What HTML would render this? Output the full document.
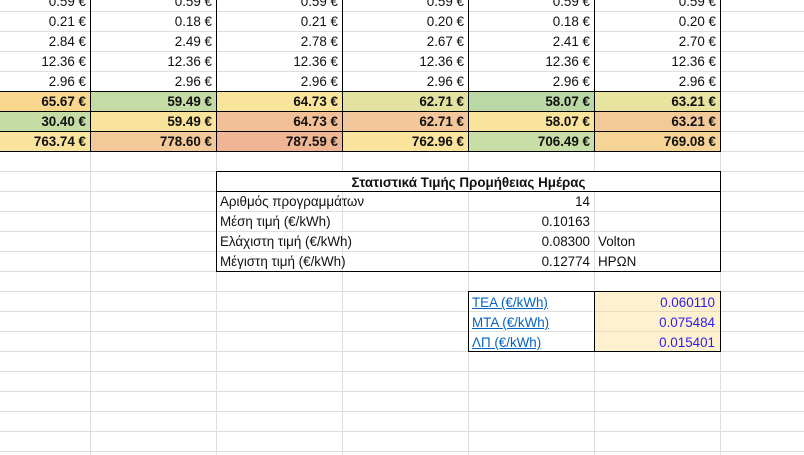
<!DOCTYPE html>
<html><head><meta charset="utf-8"><style>
body{margin:0;width:804px;height:455px;overflow:hidden;background:#fff;font-family:"Liberation Sans",sans-serif;font-size:13.4px;color:#111;position:relative}
.h{position:absolute;left:0;width:804px;height:1px;background:#dedede}
.v{position:absolute;top:0;width:1px;height:455px;background:#dedede}
.c{position:absolute;height:20px;line-height:21px;box-sizing:border-box;text-align:right;padding-right:5px;white-space:nowrap}
.b{font-weight:bold}
.bk{position:absolute;background:#000}
</style></head><body>
<div class="h" style="top:11px"></div><div class="h" style="top:31px"></div><div class="h" style="top:51px"></div><div class="h" style="top:71px"></div><div class="h" style="top:91px"></div><div class="h" style="top:111px"></div><div class="h" style="top:131px"></div><div class="h" style="top:151px"></div><div class="h" style="top:171px"></div><div class="h" style="top:191px"></div><div class="h" style="top:211px"></div><div class="h" style="top:231px"></div><div class="h" style="top:251px"></div><div class="h" style="top:271px"></div><div class="h" style="top:291px"></div><div class="h" style="top:311px"></div><div class="h" style="top:331px"></div><div class="h" style="top:351px"></div><div class="h" style="top:371px"></div><div class="h" style="top:391px"></div><div class="h" style="top:411px"></div><div class="h" style="top:431px"></div><div class="h" style="top:451px"></div>
<div class="v" style="left:90px"></div><div class="v" style="left:216px"></div><div class="v" style="left:342px"></div><div class="v" style="left:468px"></div><div class="v" style="left:594px"></div><div class="v" style="left:720px"></div>

<div class="c b" style="left:0;top:91px;width:91px;background:#f9d78f">65.67 €</div>
<div class="c b" style="left:90px;top:91px;width:127px;background:#c4dba6">59.49 €</div>
<div class="c b" style="left:216px;top:91px;width:127px;background:#f8e59b">64.73 €</div>
<div class="c b" style="left:342px;top:91px;width:127px;background:#e3e1a0">62.71 €</div>
<div class="c b" style="left:468px;top:91px;width:127px;background:#b9d8a6">58.07 €</div>
<div class="c b" style="left:594px;top:91px;width:127px;background:#e8e39f">63.21 €</div>
<div class="c b" style="left:0;top:111px;width:91px;background:#c5dca5">30.40 €</div>
<div class="c b" style="left:90px;top:111px;width:127px;background:#f9e39b">59.49 €</div>
<div class="c b" style="left:216px;top:111px;width:127px;background:#f2bf96">64.73 €</div>
<div class="c b" style="left:342px;top:111px;width:127px;background:#f3c799">62.71 €</div>
<div class="c b" style="left:468px;top:111px;width:127px;background:#fae39c">58.07 €</div>
<div class="c b" style="left:594px;top:111px;width:127px;background:#f4c999">63.21 €</div>
<div class="c b" style="left:0;top:131px;width:91px;background:#fae39c">763.74 €</div>
<div class="c b" style="left:90px;top:131px;width:127px;background:#f4c99a">778.60 €</div>
<div class="c b" style="left:216px;top:131px;width:127px;background:#efb594">787.59 €</div>
<div class="c b" style="left:342px;top:131px;width:127px;background:#fae39c">762.96 €</div>
<div class="c b" style="left:468px;top:131px;width:127px;background:#c9dea6">706.49 €</div>
<div class="c b" style="left:594px;top:131px;width:127px;background:#f6d496">769.08 €</div>

<div class="c" style="left:0;top:-9px;width:91px">0.59 €</div><div class="c" style="left:90px;top:-9px;width:127px">0.59 €</div><div class="c" style="left:216px;top:-9px;width:127px">0.59 €</div><div class="c" style="left:342px;top:-9px;width:127px">0.59 €</div><div class="c" style="left:468px;top:-9px;width:127px">0.59 €</div><div class="c" style="left:594px;top:-9px;width:127px">0.59 €</div>
<div class="c" style="left:0;top:11px;width:91px">0.21 €</div><div class="c" style="left:90px;top:11px;width:127px">0.18 €</div><div class="c" style="left:216px;top:11px;width:127px">0.21 €</div><div class="c" style="left:342px;top:11px;width:127px">0.20 €</div><div class="c" style="left:468px;top:11px;width:127px">0.18 €</div><div class="c" style="left:594px;top:11px;width:127px">0.20 €</div>
<div class="c" style="left:0;top:31px;width:91px">2.84 €</div><div class="c" style="left:90px;top:31px;width:127px">2.49 €</div><div class="c" style="left:216px;top:31px;width:127px">2.78 €</div><div class="c" style="left:342px;top:31px;width:127px">2.67 €</div><div class="c" style="left:468px;top:31px;width:127px">2.41 €</div><div class="c" style="left:594px;top:31px;width:127px">2.70 €</div>
<div class="c" style="left:0;top:51px;width:91px">12.36 €</div><div class="c" style="left:90px;top:51px;width:127px">12.36 €</div><div class="c" style="left:216px;top:51px;width:127px">12.36 €</div><div class="c" style="left:342px;top:51px;width:127px">12.36 €</div><div class="c" style="left:468px;top:51px;width:127px">12.36 €</div><div class="c" style="left:594px;top:51px;width:127px">12.36 €</div>
<div class="c" style="left:0;top:71px;width:91px">2.96 €</div><div class="c" style="left:90px;top:71px;width:127px">2.96 €</div><div class="c" style="left:216px;top:71px;width:127px">2.96 €</div><div class="c" style="left:342px;top:71px;width:127px">2.96 €</div><div class="c" style="left:468px;top:71px;width:127px">2.96 €</div><div class="c" style="left:594px;top:71px;width:127px">2.96 €</div>

<div class="bk" style="left:90px;top:0;width:1px;height:152px"></div>
<div class="bk" style="left:216px;top:0;width:1px;height:152px"></div>
<div class="bk" style="left:342px;top:0;width:1px;height:152px"></div>
<div class="bk" style="left:468px;top:0;width:1px;height:152px"></div>
<div class="bk" style="left:594px;top:0;width:1px;height:152px"></div>
<div class="bk" style="left:720px;top:0;width:1px;height:152px"></div>
<div class="bk" style="left:0;top:91px;width:721px;height:1px"></div>
<div class="bk" style="left:0;top:111px;width:721px;height:1px"></div>
<div class="bk" style="left:0;top:131px;width:721px;height:1px"></div>
<div class="bk" style="left:0;top:151px;width:721px;height:1px"></div>

<div style="position:absolute;left:216px;top:171px;width:505px;height:101px;background:#fff;border:1px solid #000;box-sizing:border-box"></div>
<div class="h" style="top:211px;left:217px;width:503px"></div><div class="h" style="top:231px;left:217px;width:503px"></div><div class="h" style="top:251px;left:217px;width:503px"></div>
<div class="v" style="left:342px;top:192px;height:79px"></div><div class="v" style="left:468px;top:192px;height:79px"></div><div class="v" style="left:594px;top:192px;height:79px"></div>
<div class="bk" style="left:216px;top:191px;width:505px;height:1px"></div>
<div class="c b" style="left:216px;top:172px;width:505px;text-align:center;padding:0">Στατιστικά Τιμής Προμήθειας Ημέρας</div>
<div class="c" style="left:220px;top:191px;text-align:left">Αριθμός προγραμμάτων</div>
<div class="c" style="left:220px;top:211px;text-align:left">Μέση τιμή (€/kWh)</div>
<div class="c" style="left:220px;top:231px;text-align:left">Ελάχιστη τιμή (€/kWh)</div>
<div class="c" style="left:220px;top:251px;text-align:left">Μέγιστη τιμή (€/kWh)</div>
<div class="c" style="left:468px;top:191px;width:127px">14</div>
<div class="c" style="left:468px;top:211px;width:127px">0.10163</div>
<div class="c" style="left:468px;top:231px;width:127px">0.08300</div>
<div class="c" style="left:468px;top:251px;width:127px">0.12774</div>
<div class="c" style="left:598px;top:231px;text-align:left">Volton</div>
<div class="c" style="left:598px;top:251px;text-align:left">ΗΡΩΝ</div>

<div style="position:absolute;left:594px;top:291px;width:126px;height:60px;background:#fdf1cf"></div>
<div class="h" style="top:311px;left:469px;width:125px"></div><div class="h" style="top:331px;left:469px;width:125px"></div>
<div class="h" style="top:311px;left:595px;width:125px;background:#e8dcc0"></div><div class="h" style="top:331px;left:595px;width:125px;background:#e8dcc0"></div>
<div style="position:absolute;left:468px;top:291px;width:253px;height:61px;border:1px solid #000;box-sizing:border-box"></div>
<div class="bk" style="left:594px;top:291px;width:1px;height:61px"></div>
<div class="c" style="left:472px;top:292px;text-align:left;color:#0563c1;text-decoration:underline">ΤΕΑ (€/kWh)</div>
<div class="c" style="left:472px;top:312px;text-align:left;color:#0563c1;text-decoration:underline">ΜΤΑ (€/kWh)</div>
<div class="c" style="left:472px;top:332px;text-align:left;color:#0563c1;text-decoration:underline">ΛΠ (€/kWh)</div>
<div class="c" style="left:594px;top:292px;width:126px;color:#2e1cf0">0.060110</div>
<div class="c" style="left:594px;top:312px;width:126px;color:#2e1cf0">0.075484</div>
<div class="c" style="left:594px;top:332px;width:126px;color:#2e1cf0">0.015401</div>
</body></html>
